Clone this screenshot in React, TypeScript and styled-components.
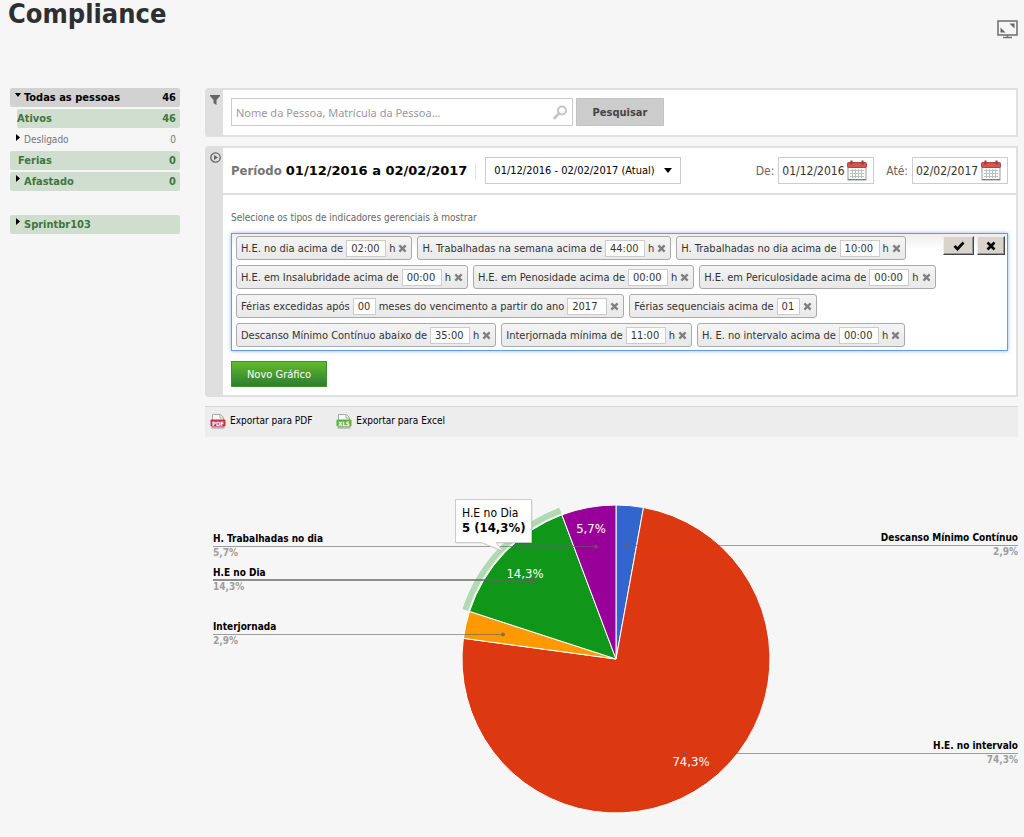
import React, { useState } from "react";
import styled, { createGlobalStyle, css } from "styled-components";

const GlobalStyle = createGlobalStyle`
  *, *::before, *::after { box-sizing: border-box; }
  body {
    margin: 0;
    background: #f6f6f6;
    color: #333;
    font-family: "DejaVu Sans Condensed", Tahoma, "DejaVu Sans", sans-serif;
    font-size: 11px;
  }
  button, input, select { font-family: inherit; font-size: inherit; margin: 0; }
  ul { list-style: none; margin: 0; padding: 0; }
  svg { display: block; flex: none; }
`;

const Page = styled.div`
  padding: 0 6px 0 8px;
`;

const Header = styled.header`
  display: flex;
  justify-content: space-between;
  align-items: flex-start;
  height: 88px;
`;

const Title = styled.h1`
  margin: 0;
  font-size: 27px;
  line-height: 28px;
  color: #2f2f2f;
`;

const IconButton = styled.button`
  padding: 0;
  border: 0;
  background: none;
  cursor: pointer;
`;

const FullscreenButton = styled(IconButton)`
  margin-top: 20px;
`;

const Columns = styled.div`
  display: grid;
  grid-template-columns: 170px minmax(0, 1fr);
  gap: 25px;
  padding-left: 2px;
`;

const Tree = styled.ul`
  display: flex;
  flex-direction: column;
  gap: 2px;
  & + & { margin-top: 24px; }
`;

const Branch = styled.li<{ $nested?: boolean }>`
  ${(p) => p.$nested && css`margin-left: 7px;`}
`;

const tones = {
  current: css`background: #d2d2d2; color: #000; font-weight: bold;`,
  group: css`background: #d0ded0; color: #41763b; font-weight: bold;`,
  plain: css`color: #757575; font-size: 10px;`,
};

const TreeRow = styled.a<{ $tone: keyof typeof tones; $indent: number }>`
  display: flex;
  justify-content: space-between;
  align-items: center;
  height: 19px;
  padding: 0 4px 0 ${(p) => p.$indent}px;
  border-radius: 2px;
  font-size: 11px;
  text-decoration: none;
  ${(p) => tones[p.$tone]}
`;

const TreeLabel = styled.span`
  display: flex;
  gap: 3px;
`;

const Main = styled.main`
  display: flex;
  flex-direction: column;
`;

const Panel = styled.section`
  display: grid;
  grid-template-columns: 18px minmax(0, 1fr);
  margin-bottom: 9px;
  border-radius: 4px;
  background: #dfdfdf;
`;

const Gutter = styled.div`
  display: flex;
  justify-content: center;
  padding: 6px 0 0 2px;
`;

const PanelBody = styled.div`
  border: 2px solid #e0e0e0;
  border-left: 0;
  background: #fff;
`;

const SearchForm = styled.form`
  display: flex;
  gap: 3px;
  padding: 8px 8px 9px;
`;

const SearchField = styled.label`
  display: flex;
  align-items: center;
  width: 342px;
  height: 28px;
  padding: 0 4px;
  border: 1px solid #ccc;
`;

const SearchInput = styled.input`
  flex: 1;
  min-width: 0;
  padding: 0;
  border: 0;
  outline: 0;
  font-family: "Noto Sans", Tahoma, sans-serif;
  font-size: 11px;
  &::placeholder { color: #999; opacity: 1; }
`;

const SearchButton = styled.button`
  width: 88px;
  height: 28px;
  border: 1px solid #c2c2c2;
  background: #ccc;
  color: #444;
  font-weight: bold;
`;

const PeriodBar = styled.div`
  display: flex;
  align-items: center;
  height: 47px;
  padding: 0 8px;
  border-bottom: 2px solid #e0e0e0;
`;

const PeriodTitle = styled.h2`
  margin: 0;
  padding-right: 8px;
  border-right: 1px solid #e0e0e0;
  font-size: 13px;
  line-height: 16px;
  color: #757575;
  white-space: nowrap;
`;

const PeriodRange = styled.span`
  font-family: "DejaVu Sans", Verdana, sans-serif;
  color: #000;
`;

const SelectBox = styled.div`
  display: grid;
  align-items: center;
  width: 196px;
  margin-left: 9px;
  & > * { grid-area: 1 / 1; }
  & > svg { justify-self: end; margin-right: 9px; pointer-events: none; }
`;

const PeriodSelect = styled.select`
  appearance: none;
  width: 100%;
  height: 27px;
  padding: 0 8px;
  border: 1px solid #ccc;
  border-radius: 0;
  background: #fff;
  color: #000;
`;

const DateFields = styled.div`
  display: flex;
  gap: 12px;
  margin-left: auto;
`;

const DateField = styled.label`
  display: flex;
  align-items: center;
  gap: 4px;
  font-size: 12px;
  color: #666;
`;

const DateBox = styled.span`
  display: flex;
  align-items: center;
  width: 96px;
  height: 27px;
  padding-left: 3px;
  border: 1px solid #ccc;
`;

const DateInput = styled.input`
  width: 65px;
  padding: 0;
  border: 0;
  outline: 0;
  background: none;
  font-size: 12px;
  color: #333;
`;

const Indicators = styled.div`
  display: flex;
  flex-direction: column;
  align-items: flex-start;
  padding: 15px 8px 8px;
`;

const Hint = styled.p`
  margin: 0 0 7px;
  font-size: 10px;
  line-height: 16px;
  color: #666;
`;

const ChipBox = styled.div`
  align-self: stretch;
  padding: 0 2px 0 4px;
  border: 1px solid #6b98e8;
  box-shadow: 0 0 4px #9ab4e0;
  background: linear-gradient(#eee, #fff 16px);
`;

const ChipActions = styled.div`
  display: flex;
  float: right;
  gap: 3px;
  margin-top: 2px;
`;

const ChipAction = styled.button<{ $wide?: boolean }>`
  display: flex;
  align-items: center;
  justify-content: center;
  width: ${(p) => (p.$wide ? 31 : 28)}px;
  height: 19px;
  padding: 0;
  border: 1px solid;
  border-color: #eee #444 #444 #eee;
  box-shadow: inset -1px -1px #999;
  background: #d8d4cc;
  color: #000;
`;

const Chip = styled.span`
  display: inline-flex;
  align-items: center;
  gap: 3px;
  height: 24px;
  margin: 2px 5px 3px 0;
  padding: 0 4px;
  border: 1px solid #aaa;
  border-radius: 3px;
  background: linear-gradient(#f4f4f4, #e9e9e9);
  vertical-align: top;
  white-space: nowrap;
`;

const ChipInput = styled.input<{ $short?: boolean }>`
  width: ${(p) => (p.$short ? 23 : 40)}px;
  height: 17px;
  padding: 0 4px;
  border: 1px solid #ccc;
  background: #fff;
  color: #333;
`;

const ChartButton = styled.button`
  width: 96px;
  height: 26px;
  margin-top: 10px;
  border: 1px solid #3f8f2c;
  background: linear-gradient(#5fbb2b, #2e7d32);
  color: #fff;
`;

const ExportBar = styled.nav`
  display: flex;
  gap: 24px;
  height: 31px;
  padding: 0 5px;
  border-top: 1px solid #d6d6d6;
  background: #ededed;
`;

const ExportLink = styled.a`
  display: flex;
  align-items: center;
  gap: 4px;
  height: 27px;
  font-size: 10px;
  color: #000;
  text-decoration: none;
`;

const Chart = styled.svg`
  width: 100%;
  height: auto;
  font-family: "DejaVu Sans Condensed", Tahoma, "DejaVu Sans", sans-serif;
`;

const LabelName = styled.text`
  font-size: 10px;
  font-weight: bold;
  fill: #000;
`;

const LabelShare = styled.text`
  font-size: 10px;
  font-weight: bold;
  fill: #9e9e9e;
`;

const SliceText = styled.text`
  font-size: 13px;
  fill: #fff;
  text-anchor: middle;
`;

const TipText = styled.text<{ $strong?: boolean }>`
  font-size: ${(p) => (p.$strong ? 13 : 12)}px;
  font-weight: ${(p) => (p.$strong ? "bold" : "normal")};
  fill: #000;
`;

const Arrow = ({ open }: { open?: boolean }) => (
  <svg width="6" height="8" viewBox="0 0 6 8" fill="#000" aria-hidden="true">
    <path d={open ? "M0 2h6L3 6z" : "M1 0l4 3.5L1 7z"} />
  </svg>
);

const Cross = ({ size, color }: { size: number; color: string }) => (
  <svg width={size} height={size} viewBox="0 0 10 10" aria-hidden="true">
    <path d="M1.5 1.5l7 7M8.5 1.5l-7 7" stroke={color} strokeWidth="2.6" />
  </svg>
);

const CalendarIcon = () => (
  <svg width="20" height="21" viewBox="0 0 20 21" aria-hidden="true">
    <rect x="1" y="5" width="18" height="15" fill="#f8faf8" stroke="#999" />
    <rect x="0.5" y="2.5" width="19" height="5" rx="1" fill="#d9534f" stroke="#b54340" />
    <path d="M4.5 0.5v4M15.5 0.5v4" stroke="#8b3a3a" strokeWidth="2" />
    <path d="M3 10.5h14M3 13.5h14M3 16.5h14M5.5 9v9M8.5 9v9M11.5 9v9M14.5 9v9" stroke="#b9c4c1" />
    <path d="M1 19.5h18" stroke="#808080" />
  </svg>
);

const FileIcon = ({ kind }: { kind: "PDF" | "XLS" }) => {
  const fill = kind === "PDF" ? "#c8343c" : "#5cb33c";
  return (
    <svg width="16" height="16" viewBox="0 0 16 16" aria-hidden="true">
      <path d="M2.5 8V1.5h8l3 3V14h-11z" fill="#f8f8f8" stroke="#aaa" />
      <path d="M10 1.5V5h3.5" fill="none" stroke="#aaa" />
      <rect x="0.5" y="6.5" width="15" height="7" rx="1" fill={fill} />
      <text x="8" y="12.5" fontSize="6" fontWeight="bold" fill="#fff" textAnchor="middle">{kind}</text>
      <path d="M1.5 15h13" stroke="#999" />
    </svg>
  );
};

type Part = string | { value: string; short?: boolean };

const initialChips: Part[][] = [
  ["H.E. no dia acima de", { value: "02:00" }, "h"],
  ["H. Trabalhadas na semana acima de", { value: "44:00" }, "h"],
  ["H. Trabalhadas no dia acima de", { value: "10:00" }, "h"],
  ["H.E. em Insalubridade acima de", { value: "00:00" }, "h"],
  ["H.E. em Penosidade acima de", { value: "00:00" }, "h"],
  ["H.E. em Periculosidade acima de", { value: "00:00" }, "h"],
  ["Férias excedidas após", { value: "00", short: true }, "meses do vencimento a partir do ano", { value: "2017" }],
  ["Férias sequenciais acima de", { value: "01", short: true }],
  ["Descanso Mínimo Contínuo abaixo de", { value: "35:00" }, "h"],
  ["Interjornada mínima de", { value: "11:00" }, "h"],
  ["H. E. no intervalo acima de", { value: "00:00" }, "h"],
];

const CX = 411;
const CY = 222;
const R = 154;
const TOTAL = 35;

const slices = [
  { count: 1, color: "#3366cc" },
  { count: 26, color: "#dc3912" },
  { count: 1, color: "#ff9900" },
  { count: 5, color: "#109618" },
  { count: 2, color: "#990099" },
];

const point = (count: number, radius: number) => {
  const angle = (count / TOTAL) * 2 * Math.PI;
  return `${CX + radius * Math.sin(angle)} ${CY - radius * Math.cos(angle)}`;
};

const arc = (from: number, to: number, radius: number) =>
  `${point(from, radius)}A${radius} ${radius} 0 ${to - from > TOTAL / 2 ? 1 : 0} 1 ${point(to, radius)}`;

const labels = [
  { name: "H. Trabalhadas no dia", share: "5,7%", y: 109, end: 391 },
  { name: "H.E no Dia", share: "14,3%", y: 143, end: 327, active: true },
  { name: "Interjornada", share: "2,9%", y: 197, end: 298 },
  { name: "Descanso Mínimo Contínuo", share: "2,9%", y: 108, end: 421, right: true },
  { name: "H.E. no intervalo", share: "74,3%", y: 316, end: 479, right: true },
];

const PieChart = () => {
  let start = 0;
  return (
    <Chart viewBox="0 0 813 400" role="img" aria-label="Indicadores gerenciais">
      {slices.map((s) => {
        const from = start;
        start += s.count;
        return (
          <path key={s.color} d={`M${CX} ${CY}L${arc(from, start, R)}Z`} fill={s.color} stroke="#fff" strokeWidth="1" />
        );
      })}
      <path d={`M${arc(28, 33, 158.5)}`} fill="none" stroke="#109618" strokeOpacity="0.3" strokeWidth="6" />
      {labels.map((l) => {
        const x = l.right ? 813 : 8;
        const anchor = l.right ? "end" : "start";
        return (
          <g key={l.name}>
            <path
              d={`M${x} ${l.y + (l.active ? 0 : 0.5)}H${l.end}`}
              stroke="#636363"
              strokeOpacity={l.active ? 0.7 : 0.6}
              strokeWidth={l.active ? 2 : 1}
            />
            <circle cx={l.end} cy={l.y + 0.5} r={l.active ? 3 : 2} fill="#636363" fillOpacity="0.7" />
            <LabelName x={x} y={l.y - 4} textAnchor={anchor}>{l.name}</LabelName>
            <LabelShare x={x} y={l.y + 10} textAnchor={anchor}>{l.share}</LabelShare>
          </g>
        );
      })}
      <SliceText x="386" y="96">5,7%</SliceText>
      <SliceText x="320" y="141">14,3%</SliceText>
      <SliceText x="486" y="329">74,3%</SliceText>
      <path d="M251.5 63.5H327.5V106.5H292L298 115L277 106.5H251.5Z" fill="#000" fillOpacity="0.1" />
      <path d="M250.5 62.5H326.5V105.5H291L298 114L276 105.5H250.5Z" fill="#fff" stroke="#ccc" />
      <TipText x="257" y="80">H.E no Dia</TipText>
      <TipText x="257" y="95" $strong>5 (14,3%)</TipText>
    </Chart>
  );
};

export default function App() {
  const [chips, setChips] = useState(initialChips);
  return (
    <Page>
      <GlobalStyle />
      <Header>
        <Title>Compliance</Title>
        <FullscreenButton aria-label="Tela cheia">
          <svg width="21" height="19" viewBox="0 0 21 19" aria-hidden="true">
            <rect x="1" y="1" width="19" height="14" fill="#f6f6f6" stroke="#757575" strokeWidth="1.6" />
            <path d="M12.5 3.5h5v5zM3.5 7.5v5h5z" fill="#666" />
            <path d="M10.5 15v2M6 17.5h9" stroke="#757575" strokeWidth="1.6" />
          </svg>
        </FullscreenButton>
      </Header>

      <Columns>
        <nav aria-label="Pessoas">
          <Tree>
            <Branch>
              <TreeRow href="#todas" $tone="current" $indent={5}>
                <TreeLabel><Arrow open />Todas as pessoas</TreeLabel>46
              </TreeRow>
            </Branch>
            <Branch $nested>
              <TreeRow href="#ativos" $tone="group" $indent={0}>Ativos<span>46</span></TreeRow>
            </Branch>
            <Branch>
              <TreeRow href="#desligado" $tone="plain" $indent={5}>
                <TreeLabel><Arrow />Desligado</TreeLabel>0
              </TreeRow>
            </Branch>
            <Branch>
              <TreeRow href="#ferias" $tone="group" $indent={8}>Ferias<span>0</span></TreeRow>
            </Branch>
            <Branch>
              <TreeRow href="#afastado" $tone="group" $indent={5}>
                <TreeLabel><Arrow />Afastado</TreeLabel>0
              </TreeRow>
            </Branch>
          </Tree>
          <Tree>
            <Branch>
              <TreeRow href="#sprintbr103" $tone="group" $indent={5}>
                <TreeLabel><Arrow />Sprintbr103</TreeLabel>
              </TreeRow>
            </Branch>
          </Tree>
        </nav>

        <Main>
          <Panel>
            <Gutter>
              <svg width="10" height="11" viewBox="0 0 10 11" aria-hidden="true">
                <path d="M0 1h10v1L6.5 6v5L3.5 9V6L0 2z" fill="#666" />
              </svg>
            </Gutter>
            <PanelBody>
              <SearchForm onSubmit={(e) => e.preventDefault()}>
                <SearchField>
                  <SearchInput aria-label="Pesquisar pessoa" placeholder="Nome da Pessoa, Matrícula da Pessoa..." />
                  <svg width="15" height="15" viewBox="0 0 15 15" aria-hidden="true">
                    <circle cx="9" cy="5.5" r="4" fill="none" stroke="#c4c4c4" strokeWidth="2" />
                    <path d="M6 8.5L1.5 13" stroke="#c4c4c4" strokeWidth="2.6" strokeLinecap="round" />
                  </svg>
                </SearchField>
                <SearchButton>Pesquisar</SearchButton>
              </SearchForm>
            </PanelBody>
          </Panel>

          <Panel>
            <Gutter>
              <svg width="11" height="11" viewBox="0 0 11 11" aria-hidden="true">
                <circle cx="5.5" cy="5.5" r="4.7" fill="none" stroke="#666" strokeWidth="1.3" />
                <path d="M4 3l4 2.5L4 8z" fill="#666" />
              </svg>
            </Gutter>
            <PanelBody>
              <PeriodBar>
                <PeriodTitle>
                  Período <PeriodRange>01/12/2016 a 02/02/2017</PeriodRange>
                </PeriodTitle>
                <SelectBox>
                  <PeriodSelect aria-label="Período">
                    <option>01/12/2016 - 02/02/2017 (Atual)</option>
                  </PeriodSelect>
                  <svg width="8" height="5" viewBox="0 0 8 5" aria-hidden="true">
                    <path d="M0 0h8L4 5z" fill="#000" />
                  </svg>
                </SelectBox>
                <DateFields>
                  <DateField>
                    De:
                    <DateBox><DateInput defaultValue="01/12/2016" /><CalendarIcon /></DateBox>
                  </DateField>
                  <DateField>
                    Até:
                    <DateBox><DateInput defaultValue="02/02/2017" /><CalendarIcon /></DateBox>
                  </DateField>
                </DateFields>
              </PeriodBar>
              <Indicators>
                <Hint>Selecione os tipos de indicadores gerenciais à mostrar</Hint>
                <ChipBox>
                  <ChipActions>
                    <ChipAction $wide aria-label="Confirmar">
                      <svg width="12" height="10" viewBox="0 0 12 10" aria-hidden="true">
                        <path d="M1.5 5l3 3L10.5 1.5" fill="none" stroke="#000" strokeWidth="2.6" />
                      </svg>
                    </ChipAction>
                    <ChipAction aria-label="Cancelar"><Cross size={10} color="#000" /></ChipAction>
                  </ChipActions>
                  {chips.map((parts) => (
                    <Chip key={String(parts[0])}>
                      {parts.map((part, i) =>
                        typeof part === "string" ? (
                          <span key={i}>{part}</span>
                        ) : (
                          <ChipInput key={i} aria-label={String(parts[i - 1])} defaultValue={part.value} $short={part.short} />
                        )
                      )}
                      <IconButton aria-label="Remover" onClick={() => setChips(chips.filter((c) => c !== parts))}>
                        <Cross size={9} color="#808080" />
                      </IconButton>
                    </Chip>
                  ))}
                </ChipBox>
                <ChartButton>Novo Gráfico</ChartButton>
              </Indicators>
            </PanelBody>
          </Panel>

          <ExportBar aria-label="Exportar">
            <ExportLink href="#pdf"><FileIcon kind="PDF" />Exportar para PDF</ExportLink>
            <ExportLink href="#xls"><FileIcon kind="XLS" />Exportar para Excel</ExportLink>
          </ExportBar>

          <PieChart />
        </Main>
      </Columns>
    </Page>
  );
}
